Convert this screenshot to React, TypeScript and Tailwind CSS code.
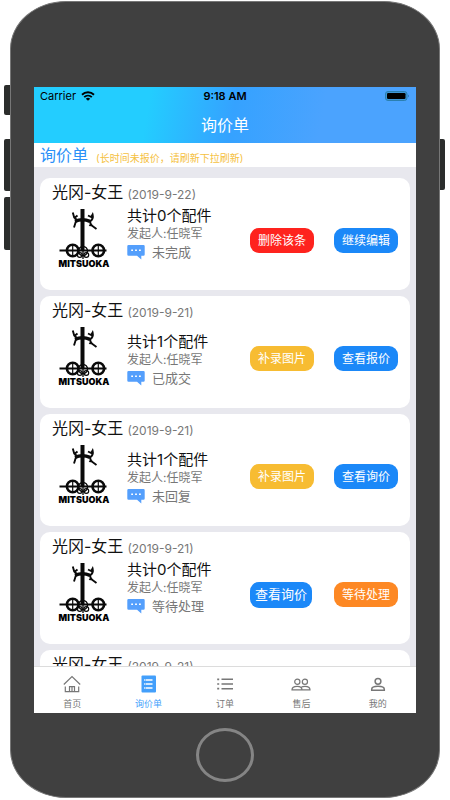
import { useState } from "react";

interface Action {
    label: string;
    className: string;
}

interface Inquiry {
    id: number;
    model: string;
    date: string;
    count: number;
    owner: string;
    status: string;
    compact: boolean;
    actions: Action[];
}

const REGULAR = "h-[25px] w-16 text-xs";
const LARGE = "h-[26px] w-[62px] mr-[2px] text-[13px]";

const BLUE = `${REGULAR} bg-[#1b88f8]`;
const BLUE_LARGE = `${LARGE} bg-[#1b88f8]`;
const RED = `${REGULAR} bg-[#fe231e]`;
const YELLOW = `${REGULAR} bg-[#f7bc32]`;
const ORANGE = `${REGULAR} bg-[#fd8824]`;

const inquiries: Inquiry[] = [
    {
        id: 1, model: "光冈-女王", date: "2019-9-22", count: 0, owner: "任晓军", status: "未完成", compact: true,
        actions: [{ label: "删除该条", className: RED }, { label: "继续编辑", className: BLUE }],
    },
    {
        id: 2, model: "光冈-女王", date: "2019-9-21", count: 1, owner: "任晓军", status: "已成交", compact: false,
        actions: [{ label: "补录图片", className: YELLOW }, { label: "查看报价", className: BLUE }],
    },
    {
        id: 3, model: "光冈-女王", date: "2019-9-21", count: 1, owner: "任晓军", status: "未回复", compact: false,
        actions: [{ label: "补录图片", className: YELLOW }, { label: "查看询价", className: BLUE }],
    },
    {
        id: 4, model: "光冈-女王", date: "2019-9-21", count: 0, owner: "任晓军", status: "等待处理", compact: true,
        actions: [{ label: "查看询价", className: BLUE_LARGE }, { label: "等待处理", className: ORANGE }],
    },
    {
        id: 5, model: "光冈-女王", date: "2019-9-21", count: 0, owner: "任晓军", status: "等待处理", compact: true,
        actions: [{ label: "查看询价", className: BLUE_LARGE }, { label: "等待处理", className: ORANGE }],
    },
];

const HomeIcon = () => (
    <svg viewBox="0 0 18 18" className="w-[18px] h-[18px]" fill="none" stroke="currentColor" strokeWidth="1.2">
        <path d="M.8 9.500 9 1.600l8.200 7.900M2.300 11.500v5.100h13.400v-5.100M6.500 16.600v-5h5v5M9 11.600v5" />
    </svg>
);

const InquiryIcon = () => (
    <svg viewBox="0 0 18 18" className="w-[18px] h-[18px]">
        <rect x="1.500" y=".5" width="14.500" height="17" rx="1" fill="currentColor" />
        <path d="M5.500 5h7M5.500 9h7M5.500 13h7" stroke="#fff" strokeWidth="1.600" />
        <path d="M4.500 4.200v1.600M4.500 8.200v1.600M4.500 12.200v1.600" stroke="#fff" strokeWidth=".8" />
    </svg>
);

const OrderIcon = () => (
    <svg viewBox="0 0 18 18" className="w-[18px] h-[18px]" fill="none" stroke="currentColor" strokeWidth="1.400">
        <path d="M5.500 4.300H17M5.500 9H17M5.500 13.700H17" />
        <path d="M1.200 4.300h2M1.200 9h2M1.200 13.700h2" strokeWidth="1.700" />
    </svg>
);

const ServiceIcon = () => (
    <svg viewBox="0 0 20 18" className="w-5 h-[18px]" fill="none" stroke="currentColor" strokeWidth="1.2">
        <circle cx="6.300" cy="6.800" r="2.600" />
        <circle cx="13.900" cy="6.800" r="2.600" />
        <path d="M1 14.800c0-2.600 2-3.500 5.200-3.500s4.800.9 4.800 3.500zM10.500 12c1-.6 2.200-.7 3.500-.7 3.200 0 5 .9 5 3.500h-8" />
    </svg>
);

const MineIcon = () => (
    <svg viewBox="0 0 18 18" className="w-[18px] h-[18px]" fill="none" stroke="currentColor" strokeWidth="1.500">
        <circle cx="9" cy="6.300" r="2.900" />
        <path d="M2.700 15.300v-1.100c0-2 1.800-2.900 6.300-2.900s6.300.9 6.300 2.900v1.100z" />
    </svg>
);

const tabs = [
    { label: "首页", Icon: HomeIcon },
    { label: "询价单", Icon: InquiryIcon },
    { label: "订单", Icon: OrderIcon },
    { label: "售后", Icon: ServiceIcon },
    { label: "我的", Icon: MineIcon },
];

const WifiIcon = () => (
    <svg viewBox="0 0 14 10" className="w-[14px] h-[10px]" fill="none" stroke="#000" strokeWidth="1.900">
        <path d="M1 3.700a8.700 8.700 0 0 1 12 0M3.200 6.100a5.500 5.500 0 0 1 7.600 0" />
        <path d="M7 9.800 4.800 7.800a3.200 3.200 0 0 1 4.400 0z" fill="#000" stroke="none" />
    </svg>
);

const BatteryIcon = () => (
    <svg viewBox="0 0 25 10" className="w-[25px] h-[10px]">
        <rect x=".5" y=".5" width="21.500" height="9" rx="2.500" fill="#3d96d6" stroke="#2b7fb0" />
        <rect x="2" y="2" width="18.500" height="6" rx="1.200" fill="#000" />
        <path d="M23 3.500q1.500 1.500 0 3z" fill="#1d5c8c" />
    </svg>
);

const ChatIcon = () => (
    <svg viewBox="0 0 18 16" className="w-[18px] h-4">
        <path d="M1.500 1h15a1.200 1.200 0 0 1 1.200 1.200v8.400a1.200 1.200 0 0 1-1.200 1.200h-2.200V15.500l-4.300-3.700H1.500a1.200 1.200 0 0 1-1.200-1.200V2.200A1.200 1.200 0 0 1 1.500 1z" fill="#549ffc" />
        <path d="M4.200 6.200h1.800M8.100 6.200h1.800M12 6.200h1.800" stroke="#fff" strokeWidth="1.600" />
    </svg>
);

const BrandLogo = () => (
    <div className="flex w-16 flex-col items-center">
        <svg viewBox="0 0 54 52" className="h-[52px] w-[54px]" fill="none" stroke="#0a0a0a">
            <path d="M25.500 2v42" strokeWidth="4" />
            <path d="M18 14.300q7.500-3 15 0" strokeWidth="3.600" />
            <path d="M15.800 5.500l1.400 5 3.800 3.500M19 14l-2 6.500M20.500 8.500l-3.200 2.500" strokeWidth="1.900" />
            <path d="M31 8.500l3.200 1.500 1.400-2.500c.8 3 .3 5-2.600 7M33 14c.2 3 1.200 4.500 2.500 5l4 3M34.500 16.500l-2 2.500" strokeWidth="1.900" />
            <path d="M2.500 43.500h47" strokeWidth="2" />
            <circle cx="15.700" cy="43.500" r="5.800" strokeWidth="2.600" />
            <circle cx="41.300" cy="43.500" r="5.800" strokeWidth="2.600" />
            <path d="M15.700 38v11M41.300 38v11" strokeWidth="1.200" />
            <circle cx="26" cy="44" r="4.500" strokeWidth="1.400" />
            <circle cx="22.800" cy="48" r="2.400" strokeWidth="1.200" />
            <circle cx="29.300" cy="48" r="2.400" strokeWidth="1.200" />
            <path d="M26 40v12" strokeWidth="1.300" />
        </svg>
        <span className="text-[9px] leading-[9px] font-black text-black">MITSUOKA</span>
    </div>
);

const InquiryCard = ({ item }: { item: Inquiry }) => (
    <li className="h-28 shrink-0 rounded-[10px] bg-white px-3">
        <div className="flex h-[29px] items-center gap-1">
            <h2 className="text-base leading-[29px] text-[#111]">{item.model}</h2>
            <time className="pt-1 text-xs text-[#777]">({item.date})</time>
        </div>
        <div className="flex">
            <BrandLogo />
            <div className={item.compact ? "ml-[11px]" : "ml-[11px] pt-2"}>
                <p className="text-[15px] leading-[18px] text-[#111]">共计{item.count}个配件</p>
                <p className="text-xs leading-[18px] text-[#777]">发起人:{item.owner}</p>
                <p className="flex items-center gap-[7px] text-[13px] leading-[18px] text-[#777]">
                    <ChatIcon />
                    {item.status}
                </p>
            </div>
            <div className="ml-auto flex gap-5 self-start pt-[21px]">
                {item.actions.map((action) => (
                    <button
                        key={action.label}
                        type="button"
                        className={`rounded-[9px] text-white ${action.className}`}
                    >
                        {action.label}
                    </button>
                ))}
            </div>
        </div>
    </li>
);

export default function App() {
    const [active, setActive] = useState("询价单");

    return (
        <div className="flex h-screen bg-white pt-px pb-[2px] font-[Inter,'Noto_Sans_CJK_SC',sans-serif]">
            {/* volume and mute keys */}
            <div className="flex w-[10px] flex-col items-end pt-[84px]">
                <div className="h-[30px] w-[6px] rounded-l-xs bg-[#2b2d2c]" />
                <div className="mt-6 h-[52px] w-[6px] rounded-l-xs bg-[#2b2d2c]" />
                <div className="mt-[6px] h-[53px] w-[6px] rounded-l-xs bg-[#2b2d2c]" />
            </div>

            <div className="flex min-w-0 flex-1 flex-col rounded-[56px/48px] border border-[#777] bg-[#404040] px-[23px] pt-[85px]">
                <div className="flex min-h-0 flex-1 flex-col bg-white">
                    <header className="bg-linear-[100deg,#23cdff_30%,#35a2ff_52%,#4ba3fe_75%]">
                        <div className="grid h-[18px] grid-cols-3 items-center px-[6px] text-[11px] text-black">
                            <span className="flex items-center gap-[5px]">
                                Carrier
                                <WifiIcon />
                            </span>
                            <span className="text-center font-semibold">9:18 AM</span>
                            <span className="flex justify-end">
                                <BatteryIcon />
                            </span>
                        </div>
                        <h1 className="pt-[2px] text-center text-base leading-9 text-white">询价单</h1>
                    </header>

                    <div className="flex h-6 items-center gap-2 px-[6px]">
                        <span className="text-base leading-6 text-[#2a90f8]">询价单</span>
                        <span className="pt-[6px] text-[10px] leading-[14px] text-[#f5c141]">(长时间未报价，请刷新下拉刷新)</span>
                    </div>

                    <main className="min-h-0 flex-1 overflow-hidden bg-[#e8e8ee] px-[6px] pt-[11px]">
                        <ul className="flex flex-col gap-[6px]">
                            {inquiries.map((item) => (
                                <InquiryCard key={item.id} item={item} />
                            ))}
                        </ul>
                    </main>

                    <nav className="grid h-[47px] shrink-0 grid-cols-5 border-t border-[#dcdcdc] bg-white">
                        {tabs.map(({ label, Icon }) => (
                            <button
                                key={label}
                                type="button"
                                onClick={() => setActive(label)}
                                className={`flex flex-col items-center gap-1 pt-2 text-[9px] leading-[13px] ${active === label ? "text-[#439ffb]" : "text-[#777]"}`}
                            >
                                <Icon />
                                {label}
                            </button>
                        ))}
                    </nav>
                </div>

                <div className="flex h-[84px] shrink-0 items-start justify-center pt-[15px]">
                    <button type="button" aria-label="Home" className="h-[54px] w-[58px] rounded-[50%] border-3 border-[#858585]" />
                </div>
            </div>

            {/* power key */}
            <div className="w-[10px] pt-[138px]">
                <div className="h-[51px] w-[5px] rounded-r-xs bg-[#2b2d2c]" />
            </div>
        </div>
    );
}
